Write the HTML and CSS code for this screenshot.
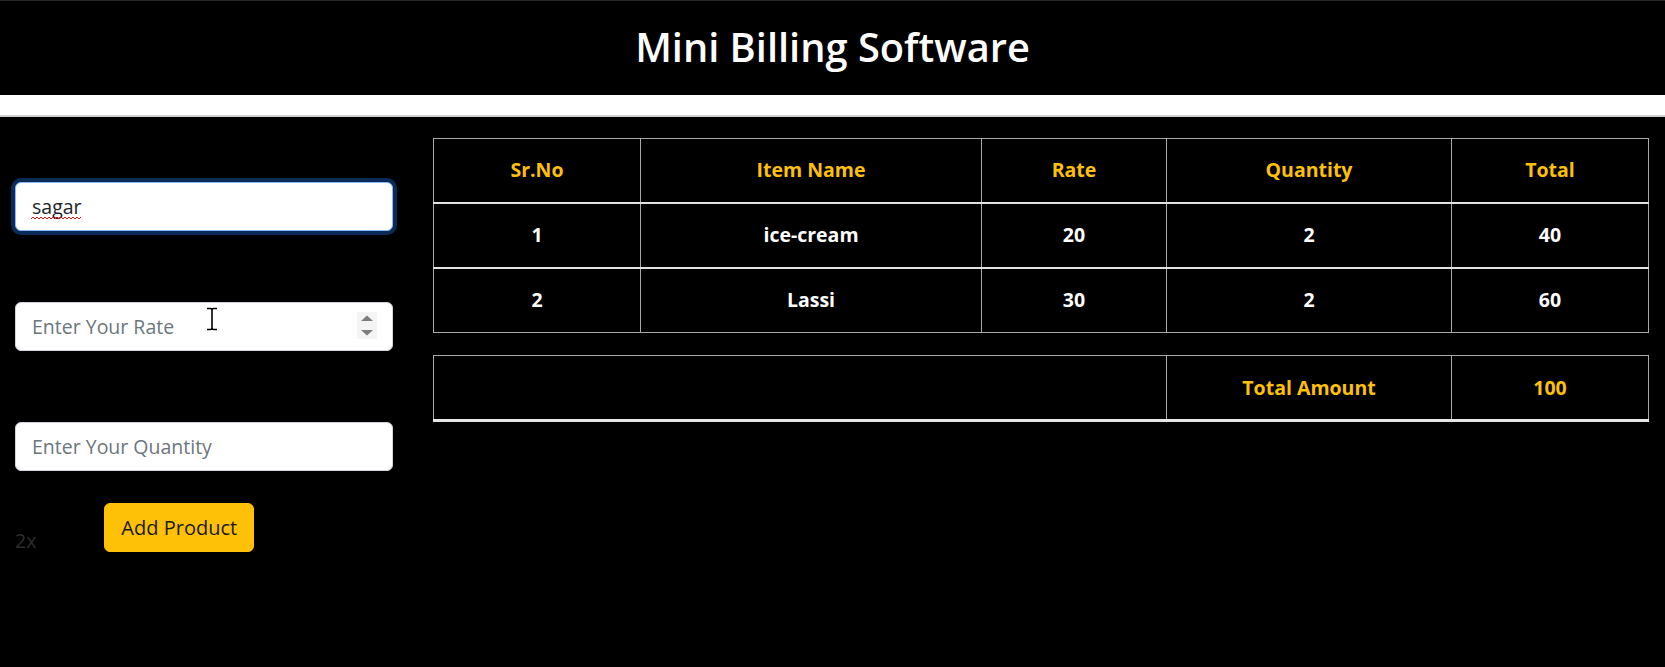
FILE: index.html
```html
<!DOCTYPE html>
<html lang="en">
<head>
<meta charset="utf-8">
<title>Mini Billing Software</title>
<link rel="stylesheet" href="styles.css">
</head>
<body>
<header class="topbar">
  <h1 class="title">Mini Billing Software</h1>
</header>
<div class="strip"></div>
<main class="main">
  <section class="form-col">
    <div class="field-wrap">
      <input class="field field-focus" type="text" value="sagar" spellcheck="false">
      <svg class="squiggle" width="50" height="4" viewBox="0 0 50 4"><path d="M0 3 L2 1 L4 3 L6 1 L8 3 L10 1 L12 3 L14 1 L16 3 L18 1 L20 3 L22 1 L24 3 L26 1 L28 3 L30 1 L32 3 L34 1 L36 3 L38 1 L40 3 L42 1 L44 3 L46 1 L48 3 L50 1" stroke="#e01010" stroke-width="1" fill="none"/></svg>
    </div>
    <div class="field-wrap">
      <input class="field" type="text" placeholder="Enter Your Rate">
      <span class="spinner">
        <svg width="20" height="27" viewBox="0 0 20 27"><path d="M4 9 L10 3.5 L16 9 Z" fill="#7d7d7d"/><path d="M4 18 L10 23.5 L16 18 Z" fill="#7d7d7d"/></svg>
      </span>
      <svg class="ibeam" width="14" height="24" viewBox="0 0 14 24"><path d="M2 1.5 H5.5 Q7 1.5 7 3 Q7 1.5 8.5 1.5 H12 M7 3 V21 M2 22.5 H5.5 Q7 22.5 7 21 Q7 22.5 8.5 22.5 H12" stroke="#000" stroke-width="1.6" fill="none"/></svg>
    </div>
    <input class="field" type="text" placeholder="Enter Your Quantity">
    <div class="actions">
      <span class="hint">2x</span>
      <button class="btn-add" type="button">Add Product</button>
    </div>
  </section>
  <section class="table-col">
    <table class="bill">
      <thead>
        <tr>
          <th class="c-sr">Sr.No</th>
          <th class="c-name">Item Name</th>
          <th class="c-rate">Rate</th>
          <th class="c-qty">Quantity</th>
          <th class="c-total">Total</th>
        </tr>
      </thead>
      <tbody>
        <tr class="row-first">
          <td>1</td><td>ice-cream</td><td>20</td><td>2</td><td>40</td>
        </tr>
        <tr>
          <td>2</td><td>Lassi</td><td>30</td><td>2</td><td>60</td>
        </tr>
      </tbody>
    </table>
    <table class="bill sum">
      <tbody>
        <tr>
          <td class="c-blank"></td>
          <td class="c-qty gold">Total Amount</td>
          <td class="c-total gold">100</td>
        </tr>
      </tbody>
    </table>
  </section>
</main>
</body>
</html>
```

FILE: styles.css
```css
* { box-sizing: border-box; }
html, body { margin: 0; padding: 0; }
body {
  background: #000;
  color: #fff;
  font-family: "Open Sans", "Noto Sans", sans-serif;
  min-height: 667px;
}
.topbar {
  height: 95px;
  border-top: 1px solid #262626;
  display: flex;
  align-items: center;
  justify-content: center;
  padding-bottom: 3px;
}
.title {
  margin: 0;
  font-size: 39.8px;
  font-weight: 600;
  line-height: 1.2;
  color: #fff;
}
.strip {
  height: 22px;
  background: #fff;
  border-bottom: 2px solid #cfcfcf;
}
.main {
  display: flex;
  gap: 40px;
  padding: 0 17px 0 15px;
}
.form-col {
  width: 378px;
  flex: none;
  padding-top: 65px;
  display: flex;
  flex-direction: column;
  gap: 71px;
}
.field-wrap { position: relative; }
.field {
  display: block;
  width: 100%;
  height: 49px;
  padding: 8px 16px;
  font-family: "Open Sans", "Noto Sans", sans-serif;
  font-size: 19.5px;
  line-height: 1.5;
  color: #212529;
  background: #fff;
  border: 1px solid #ced4da;
  border-radius: 6px;
  outline: none;
}
.field::placeholder { color: #6c757d; }
.field-focus {
  border-color: #86b7fe;
  box-shadow: 0 0 0 4px #0a2a57;
}
.squiggle {
  position: absolute;
  left: 16px;
  top: 34px;
}
.spinner {
  position: absolute;
  right: 16px;
  top: 10px;
  width: 20px;
  height: 27px;
  background: #f4f4f4;
  display: block;
}
.spinner svg { display: block; }
.ibeam {
  position: absolute;
  left: 190px;
  top: 5px;
}
.actions {
  display: flex;
  align-items: flex-end;
  gap: 68px;
  margin-top: -39px;
}
.hint {
  font-size: 19.5px;
  line-height: 22px;
  color: #2e2e2e;
}
.btn-add {
  height: 49px;
  padding: 0 16px;
  background: #ffc107;
  color: #1a1a1a;
  border: 1px solid #ffc107;
  border-radius: 6px;
  font-family: "Open Sans", "Noto Sans", sans-serif;
  font-size: 20px;
}
.table-col {
  flex: 1;
  padding-top: 21px;
}
.bill {
  width: 100%;
  table-layout: fixed;
  border-collapse: collapse;
  border: 1px solid #a9a9a9;
}
.bill th, .bill td {
  border-left: 1px solid #a9a9a9;
  border-right: 1px solid #a9a9a9;
  padding: 16px 8px;
  height: 65px;
  text-align: center;
  vertical-align: middle;
  font-size: 19.5px;
  font-weight: 700;
  line-height: 30px;
}
.bill th { color: #ffc107; border-bottom: 2px solid #e2e2e2; height: 64px; }
.bill td { color: #fff; }
.row-first td { border-bottom: 2px solid #e2e2e2; }
.c-sr { width: 207px; }
.c-name { width: 341px; }
.c-rate { width: 185px; }
.c-qty { width: 285px; }
.c-total { width: 197px; }
.c-blank { width: 733px; }
.sum { margin-top: 22px; border-bottom: 3px solid #e6e6e6; }
.sum td { border-bottom: 3px solid #e6e6e6; }
.bill td.gold { color: #ffc107; }
```
